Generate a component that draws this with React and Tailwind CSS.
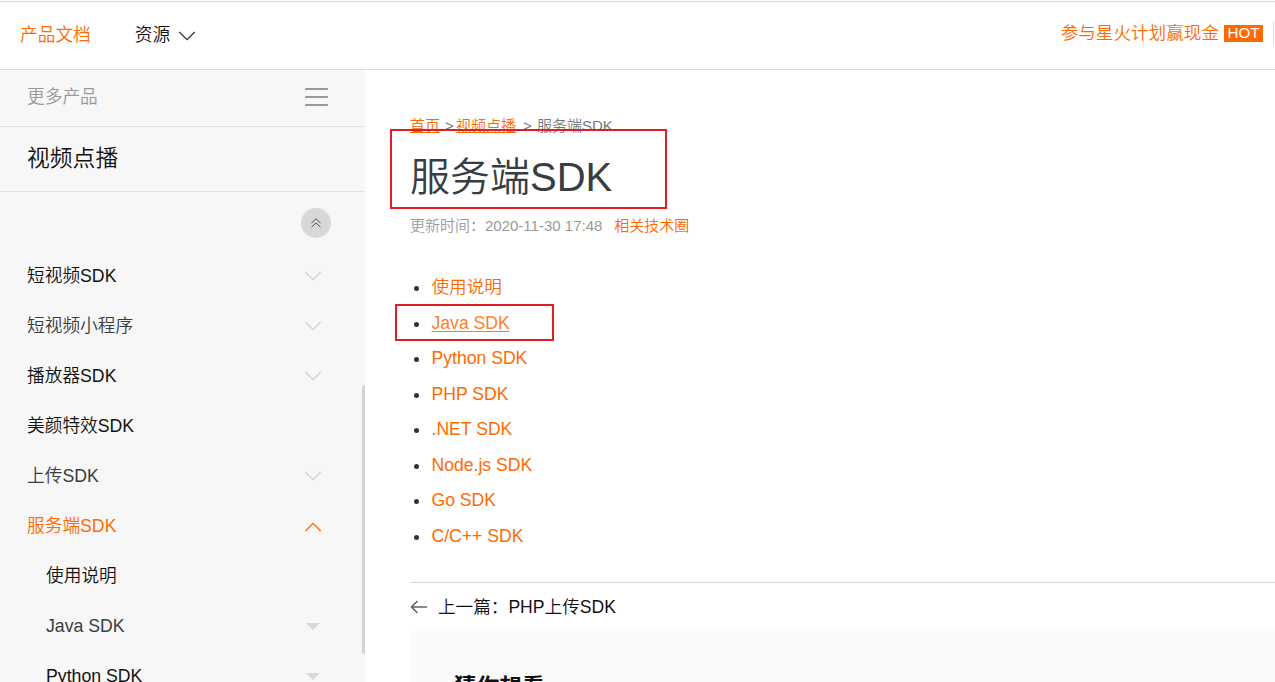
import React from 'react';

const products = [
  { label: '短视频SDK', tone: 'text-[#111]', arrow: true },
  { label: '短视频小程序', tone: 'text-[#373d41]', arrow: true },
  { label: '播放器SDK', tone: 'text-[#111]', arrow: true },
  { label: '美颜特效SDK', tone: 'text-[#111]', arrow: false },
  { label: '上传SDK', tone: 'text-[#373d41]', arrow: true },
];

const children = [
  { label: '使用说明', tone: 'text-[#111]', arrow: false },
  { label: 'Java SDK', tone: 'text-[#373d41]', arrow: true },
  { label: 'Python SDK', tone: 'text-[#111]', arrow: true },
];

const links = ['使用说明', 'Java SDK', 'Python SDK', 'PHP SDK', '.NET SDK', 'Node.js SDK', 'Go SDK', 'C/C++ SDK'];

function Chevron({ up = false, className }) {
  return (
    <svg width="18" height="10" viewBox="0 0 18 10" fill="none" stroke="currentColor" strokeWidth="1.3" className={className}>
      <path d={up ? 'M1.3 9 L9 1.3 L16.7 9' : 'M1.3 1 L9 8.7 L16.7 1'} />
    </svg>
  );
}

function Header() {
  return (
    <header className="flex h-[70px] shrink-0 items-center border-b border-[#dcdcdc] pt-px text-[17.7px]">
      <a className="ml-5 leading-6 text-[#ff6a00]">产品文档</a>
      <a className="ml-11 leading-6 text-[#111]">资源</a>
      <Chevron className="ml-2 mt-px text-[#333]" />
      <div className="ml-auto flex h-[70px] items-center pb-1 text-[17.6px]">
        <a className="leading-6 text-[#ff6a00]">参与星火计划赢现金</a>
        <span className="ml-[5px] mt-px flex h-[17px] w-[39px] items-center justify-center bg-[#ff6a00] text-[15.2px] text-white">HOT</span>
        <span className="ml-2.5 mr-px h-6 w-px bg-[#dcdcdc]" />
      </div>
    </header>
  );
}

function Sidebar() {
  return (
    <aside className="flex w-[365px] shrink-0 overflow-hidden bg-[#f7f7f7] text-[17.7px]">
      <div className="flex w-[362px] shrink-0 flex-col">
        <div className="flex h-[57px] w-[365px] shrink-0 items-center justify-between border-b border-[#e2e2e2] pb-0.5 pl-[27px] pr-[37px] text-[#999]">
          <span className="leading-6">更多产品</span>
          <svg width="23" height="20" viewBox="0 0 23 20" stroke="currentColor" strokeWidth="2.1" strokeLinecap="round">
            <path d="M1 2 H22 M1 10 H22 M1 18 H22" />
          </svg>
        </div>
        <div className="flex h-[65px] w-[365px] shrink-0 items-center border-b border-[#e2e2e2] pb-px pl-[27px] text-[22.8px] text-[#111]">
          视频点播
        </div>
        <div className="flex h-[59px] shrink-0 justify-end pr-[31px] pt-4">
          <span className="flex size-[30px] items-center justify-center rounded-full bg-[#d8d8d8]">
            <svg width="10" height="10" viewBox="0 0 10 10" fill="none" stroke="#444" strokeWidth="0.9">
              <path d="M0.5 5 L5 0.8 L9.5 5 M0.5 9.2 L5 5 L9.5 9.2" />
            </svg>
          </span>
        </div>
        {products.map((p) => (
          <div key={p.label} className={`flex h-[50px] shrink-0 items-center justify-between pl-[27px] pr-10 ${p.tone}`}>
            <span className="leading-6">{p.label}</span>
            {p.arrow && <Chevron className="text-[#d0d0d0]" />}
          </div>
        ))}
        <div className="flex h-[50px] shrink-0 items-center justify-between pl-[27px] pr-10 text-[#ff6a00]">
          <span className="leading-6">服务端SDK</span>
          <Chevron up className="mt-0.5" />
        </div>
        {children.map((c) => (
          <div key={c.label} className={`flex h-[50px] shrink-0 items-center justify-between pl-[46px] pr-[42px] ${c.tone}`}>
            <span className="leading-6">{c.label}</span>
            {c.arrow && (
              <svg width="14" height="7" viewBox="0 0 14 7">
                <path d="M0 0 H14 L7 7 Z" fill="#d8d8d8" />
              </svg>
            )}
          </div>
        ))}
      </div>
      <div className="mt-[315px] h-[269px] w-[3px] rounded bg-[#d4d4d4]" />
    </aside>
  );
}

function Article() {
  return (
    <main className="relative flex min-w-0 grow flex-col overflow-hidden pl-[45px]">
      <nav className="mt-[46px] flex h-5 shrink-0 items-center text-[15px] leading-5 text-[#73777a]">
        <a className="text-[#ff6a00] underline">首页</a>
        <span className="ml-[5px] w-[11px]">&gt;</span>
        <a className="text-[#ff6a00] underline">视频点播</a>
        <span className="ml-[7px] w-[14px]">&gt;</span>
        <span>服务端SDK</span>
      </nav>
      <h1 className="mt-4 h-[50px] shrink-0 whitespace-nowrap text-[40px] leading-[50px] text-[#373d41]">服务端SDK</h1>
      <div className="mt-3 flex h-6 shrink-0 items-center text-[15px] leading-6 text-[#999]">
        <span>更新时间：2020-11-30 17:48</span>
        <a className="ml-3 text-[#ff6a00]">相关技术圈</a>
      </div>
      <ul className="mt-[31px] flex shrink-0 flex-col pt-[0.5px] text-[17.6px]">
        {links.map((l) => (
          <li key={l} className="flex h-[35.5px] items-center">
            <span className="ml-1 mt-[3px] size-[5px] rounded-full bg-[#333]" />
            <a className={`ml-[12.5px] leading-6 text-[#ff6a00] ${l === 'Java SDK' ? 'underline opacity-85 underline-offset-2' : ''}`}>{l}</a>
          </li>
        ))}
      </ul>
      <div className="mt-[28.5px] flex h-[49px] shrink-0 items-center border-t border-[#d5d5d5] text-[17.6px] text-[#111]">
        <svg width="18" height="14" viewBox="0 0 18 14" fill="none" stroke="#666" strokeWidth="1.6">
          <path d="M17 7 H1.5 M7.5 1 L1.5 7 L7.5 13" />
        </svg>
        <span className="ml-2.5 leading-6">上一篇：PHP上传SDK</span>
      </div>
      <section className="h-[140px] shrink-0 bg-[#fafafa] pl-11 pt-[39px]">
        <h2 className="whitespace-nowrap text-[22.7px] font-bold leading-[34px] text-[#111]">猜你想看</h2>
      </section>
      <div className="absolute left-[25px] top-[59px] h-[80px] w-[277px] border-2 border-[#e31b23]" />
      <div className="absolute left-[30px] top-[234px] h-[37px] w-[159px] border-2 border-[#e31b23]" />
    </main>
  );
}

export default function App() {
  return (
    <div className="flex h-[682px] w-[1275px] flex-col overflow-hidden bg-white font-[350] [font-family:'Liberation_Sans','Noto_Sans_CJK_SC',sans-serif]">
      <div className="mt-px -mb-0.5 h-px shrink-0 bg-[#d8d8d8]" />
      <Header />
      <div className="flex min-h-0 grow">
        <Sidebar />
        <Article />
      </div>
    </div>
  );
}
